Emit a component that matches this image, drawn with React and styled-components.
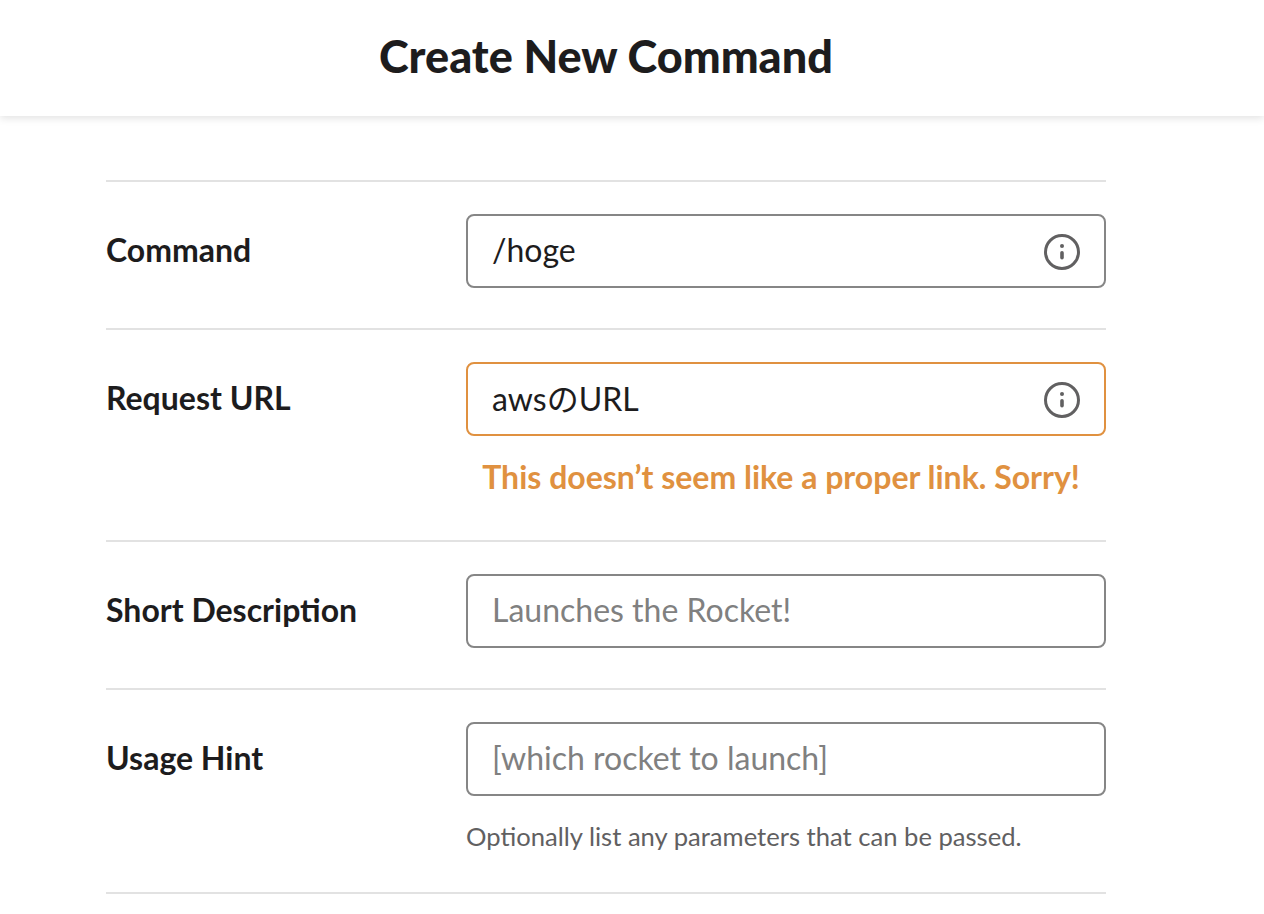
import styled, { createGlobalStyle } from 'styled-components'

const GlobalStyle = createGlobalStyle`
    html, body {
        margin : 0;
        padding : 0;
        background : #ffffff;
        overflow : hidden;
    }
    body {
        font-family : Lato, "Noto Sans CJK JP", sans-serif;
        color : #1d1c1d;
    }
`

const Header = styled.header`
    height : 116px;
    display : flex;
    align-items : center;
    padding-left : 379px;
    padding-bottom : 5px;
    box-sizing : border-box;
    background : #ffffff;
    box-shadow : 0 2px 8px rgba(0, 0, 0, 0.12);
`
const Title = styled.h1`
    margin : 0;
    font-size : 45px;
    line-height : 56px;
    font-weight : 900;
    color : #1d1c1d;
`
const Form = styled.form`
    width : 1000px;
    margin : 64px 0 0 106px;
    border-bottom : 2px solid #e2e2e2;
`
const Row = styled.div`
    display : grid;
    grid-template-columns : 360px 640px;
    padding : 32px 0 ${(p) => p.$bottom || 40}px;
    border-top : 2px solid #e2e2e2;
`
const Label = styled.label`
    font-size : 32px;
    font-weight : 700;
    line-height : 72px;
    color : #1d1c1d;
`
const Field = styled.div`
    position : relative;
`
const Input = styled.input`
    display : block;
    box-sizing : border-box;
    width : 640px;
    height : 74px;
    padding : 0 24px 4px;
    border : 2px solid ${(p) => (p.$warn ? '#e09140' : '#868686')};
    border-radius : 8px;
    outline : none;
    background : #ffffff;
    font-family : Lato, "Noto Sans CJK JP", sans-serif;
    font-size : 32px;
    color : #1d1c1d;

    &::placeholder {
        color : #808080;
        opacity : 1;
    }
`
const InfoButton = styled.span`
    position : absolute;
    top : 20px;
    right : 26px;
    width : 36px;
    height : 36px;
    display : block;
    color : #616061;
`
const ErrorText = styled.p`
    margin : 22px 0 0;
    padding-right : 10px;
    text-align : center;
    font-size : 32px;
    line-height : 38px;
    font-weight : 700;
    color : #e09140;
`
const Hint = styled.p`
    margin : 23px 0 0;
    font-size : 25.6px;
    line-height : 34px;
    color : #616061;
`

function InfoIcon(){
    return(
        <InfoButton>
            <svg width="36" height="36" viewBox="0 0 36 36" fill="none">
                <circle cx="18" cy="18" r="16.5" stroke="currentColor" strokeWidth="3" />
                <circle cx="18" cy="12" r="2" fill="currentColor" />
                <rect x="16.2" y="17" width="3.6" height="8.5" rx="1.8" fill="currentColor" />
            </svg>
        </InfoButton>
    )
}

export default function App(){
    return(
        <>
            <GlobalStyle />
            <Header>
                <Title>Create New Command</Title>
            </Header>
            <Form>
                <Row>
                    <Label>Command</Label>
                    <Field>
                        <Input readOnly value="/hoge" />
                        <InfoIcon />
                    </Field>
                </Row>
                <Row $bottom={44}>
                    <Label>Request URL</Label>
                    <Field>
                        <Input $warn readOnly value="awsのURL" />
                        <InfoIcon />
                        <ErrorText>This doesn’t seem like a proper link. Sorry!</ErrorText>
                    </Field>
                </Row>
                <Row>
                    <Label>Short Description</Label>
                    <Field>
                        <Input readOnly placeholder="Launches the Rocket!" />
                    </Field>
                </Row>
                <Row $bottom={39}>
                    <Label>Usage Hint</Label>
                    <Field>
                        <Input readOnly placeholder="[which rocket to launch]" />
                        <Hint>Optionally list any parameters that can be passed.</Hint>
                    </Field>
                </Row>
            </Form>
        </>
    )
}
